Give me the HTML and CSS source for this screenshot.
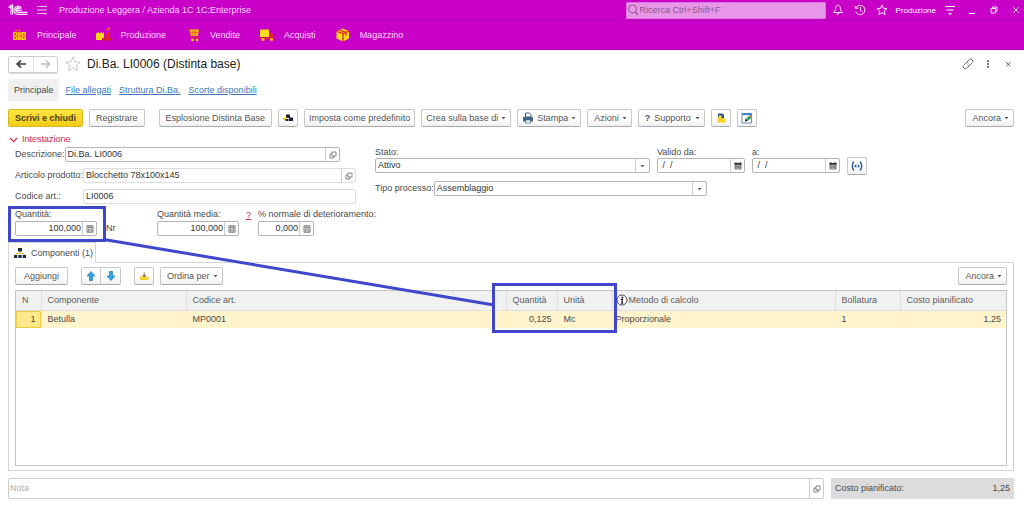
FILE: index.html
```html
<!DOCTYPE html>
<html lang="it">
<head>
<meta charset="utf-8">
<meta name="viewport" content="width=device-width, initial-scale=1">
<title>Di.Ba. LI0006 (Distinta base)</title>
<link rel="stylesheet" href="styles.css">
</head>
<body>
<svg class="sprite" aria-hidden="true">
  <symbol id="open" viewBox="0 0 8 8"><path d="M3 1h4v4H3zM3 3H1v4h4V5" fill="none" stroke="#777" stroke-width=".9"/></symbol>
  <symbol id="calendar" viewBox="0 0 8 8"><path d="M.5 1h7v6.500h-7z" fill="#777"/><path d="M.5 1h7v1.500h-7z" fill="#333"/><path d="M2 0v1.500M6 0v1.500" stroke="#333"/><path d="M1.500 3.500h5M1.500 5h5M1.500 6.500h5" stroke="#ddd" stroke-width=".7" stroke-dasharray="1 .6"/></symbol>
  <symbol id="calc" viewBox="0 0 8 8"><path d="M1 .8h6v6.400H1z" fill="#eee" stroke="#666" stroke-width=".9"/><path d="M2 2.300h4" stroke="#666"/><path d="M2 4.200h4M2 5.800h4" stroke="#666" stroke-dasharray="1 .5"/></symbol>
  <symbol id="caret" viewBox="0 0 5 4"><path d="M.5 1h4L2.500 3.200z" fill="#555"/></symbol>
</svg>

<header class="titlebar">
  <svg class="logo" viewBox="0 0 20 12" aria-label="1C" role="img"><g fill="none" stroke="#fbe6fb" stroke-width="1.200"><path d="M.6 3.500 3 1.500v9M2 4 4.600 1v9.500"/><path d="M13.500 4.500A4 4 0 1 0 10 10.300h9.500M12 5A2.300 2.300 0 1 0 10 8.300h9.500M10.600 5.400a1 1 0 1 0-.4 1h4"/></g></svg>
  <button class="icon-btn" aria-label="Menu"><svg class="i12" viewBox="0 0 12 12"><path d="M1 2.500h10M1 6h10M1 9.500h10" stroke="#f3c4f3"/></svg></button>
  <span class="app-name">Produzione Leggera / Azienda 1C 1C:Enterprise</span>
  <label class="search"><svg class="i12" viewBox="0 0 12 12"><circle cx="5.500" cy="5" r="4" fill="none" stroke="#8e5c8e"/><path d="m8.300 8 2.500 3" stroke="#8e5c8e" stroke-width="1.400"/></svg><input type="search" placeholder="Ricerca Ctrl+Shift+F" aria-label="Ricerca"></label>
  <div class="tools">
    <button class="icon-btn" aria-label="Notifiche"><svg class="i12" viewBox="0 0 12 12"><path d="M1.500 8.500C4 6.500 3.300 5 3.700 3.500 4 2 5 1.500 6 1.500s2 .5 2.300 2c.4 1.500-.3 3 2.200 5zM6 .5v1" fill="none" stroke="#fff" stroke-width=".9"/><path d="M4.500 9.500h3L6 11z" fill="#fff"/></svg></button>
    <button class="icon-btn" aria-label="Cronologia"><svg class="i12" viewBox="0 0 12 12"><path d="M1.800 7.500A4.700 4.700 0 1 0 2 4M1 2l.7 2.500 2.500-.5M6.500 3v3.300l2 1.500" fill="none" stroke="#fff" stroke-width=".9"/></svg></button>
    <button class="icon-btn" aria-label="Preferiti"><svg class="i12" viewBox="0 0 12 12"><path d="m6 1 1.400 3.300 3.600.3-2.700 2.300.8 3.600L6 8.600l-3.100 1.900.8-3.600L1 4.600l3.600-.3z" fill="none" stroke="#fff" stroke-width=".9"/></svg></button>
  </div>
  <span class="user">Produzione</span>
  <div class="tools">
    <button class="icon-btn" aria-label="Opzioni"><svg class="i12" viewBox="0 0 12 12"><path d="M1 2.500h10M2.500 6h7" stroke="#fff"/><path d="M4 9h4L6 11z" fill="#fff"/></svg></button>
    <button class="icon-btn" aria-label="Riduci"><svg class="i12" viewBox="0 0 12 12"><path d="M3 9.500h6" stroke="#fff"/></svg></button>
    <button class="icon-btn" aria-label="Ripristina"><svg class="i12" viewBox="0 0 12 12"><path d="M3 4.500h4.500V9H3zM4.500 4.500V3H9v4.500H7.500" fill="none" stroke="#fff" stroke-width=".9"/></svg></button>
    <button class="icon-btn" aria-label="Chiudi"><svg class="i12" viewBox="0 0 12 12"><path d="m3 3 6 6M9 3 3 9" stroke="#fff" stroke-width=".9"/></svg></button>
  </div>
</header>

<nav class="sections">
  <a href="#"><svg class="i16" viewBox="0 0 16 16"><path d="M1 5h13v8H1z" fill="#ffcf20"/><path d="M4 6.500V3h3.500v3.500" fill="none" stroke="#f05a20" stroke-width="1.200"/><path d="M5.500 5v8M9 5v8M1 9h13" stroke="#f05a20" stroke-width=".9"/><path d="M2.500 7h1.500M11 7h1.500M2.500 11h1.500M11 11h1.500" stroke="#d8202c" stroke-width="1.500"/></svg>Principale</a>
  <a href="#"><svg class="i16" viewBox="0 0 16 16"><path d="M0 6.500 3 5v1.500L6 5v1.500L8 5v8H0z" fill="#ffd91c"/><path d="m9.500 13 1.500-8h2l1 8z" fill="#e8202c"/><path d="M6 11h9.500v2.500H6z" fill="#d8202c"/><path d="M11 3.500c0-2 2-1 3-3" fill="none" stroke="#f07a20" stroke-width="1.500"/></svg>Produzione</a>
  <a href="#"><svg class="i16" viewBox="0 0 16 16"><path d="M2 2.500h2.500l2 8.500h6.500" fill="none" stroke="#e8202c" stroke-width="1.400"/><path d="M4.500 2.500h9.500l-1 6.500H6z" fill="#ffb81c"/><path d="M8 3.500V9M10.500 3.500V9M5.500 5.500h7.500" stroke="#e8502c" stroke-width=".8"/><circle cx="7.500" cy="13" r="1.300" fill="#ffd91c"/><circle cx="12" cy="13" r="1.300" fill="#ffd91c"/></svg>Vendite</a>
  <a href="#"><svg class="i16" viewBox="0 0 16 16"><path d="M1 2.500h9v7.500H1z" fill="#ffd91c"/><path d="M10.500 6h2.500l2 3v3H1v-1.500h9.500z" fill="#e8202c"/><circle cx="4" cy="12.500" r="1.600" fill="#ffb81c"/><circle cx="12.500" cy="12.500" r="1.600" fill="#ffb81c"/></svg>Acquisti</a>
  <a href="#"><svg class="i16" viewBox="0 0 16 16"><path d="m1.500 4.500 6-3 6.500 2.500v7.500l-6 3-6.500-3z" fill="#ffd91c"/><path d="m1.500 4.500 6.500 2v8m0-8 6-2.500M4.500 3l6.500 2.500v3" fill="none" stroke="#e0202c" stroke-width="1.300"/></svg>Magazzino</a>
</nav>

<main class="form">
  <div class="heading">
    <div class="history"><button aria-label="Indietro"><svg class="i12" viewBox="0 0 12 12"><path d="M11 6H3M6 2.500 2.200 6 6 9.500" fill="none" stroke="#444" stroke-width="1.700"/></svg></button><button aria-label="Avanti"><svg class="i12" viewBox="0 0 12 12"><path d="M1 6h8M6 2.500 9.800 6 6 9.500" fill="none" stroke="#bbb" stroke-width="1.300"/></svg></button></div>
    <button class="icon-btn" aria-label="Aggiungi ai preferiti"><svg class="i16" viewBox="0 0 16 16"><path d="m8 .8 1.900 5 5.300.3-4.100 3.300 1.400 5.200L8 11.700l-4.500 2.900 1.400-5.200L.8 6.100l5.300-.3z" fill="none" stroke="#bbb" stroke-width=".8"/></svg></button>
    <h1>Di.Ba. LI0006 (Distinta base)</h1>
    <div class="window-tools">
      <button class="icon-btn" aria-label="Collegamento"><svg class="i12" viewBox="0 0 12 12"><path d="M5 4 7.200 1.800a2 2 0 0 1 3 3L8 7a2 2 0 0 1-2.500 0M7 8l-2.200 2.200a2 2 0 0 1-3-3L4 5a2 2 0 0 1 2.500 0" fill="none" stroke="#777"/></svg></button>
      <button class="icon-btn" aria-label="Altro"><svg class="i12" viewBox="0 0 12 12"><path d="M5 2h2v2H5zM5 5h2v2H5zM5 8h2v2H5z" fill="#777"/></svg></button>
      <button class="icon-btn" aria-label="Chiudi scheda"><svg class="i12" viewBox="0 0 12 12"><path d="m4 4 4.500 4.500M8.500 4 4 8.500" stroke="#666"/></svg></button>
    </div>
  </div>

  <nav class="pages">
    <a class="current" href="#">Principale</a><a href="#">File allegati</a><a href="#">Struttura Di.Ba.</a><a href="#">Scorte disponibili</a>
  </nav>

  <div class="commands">
    <button class="btn primary">Scrivi e chiudi</button>
    <button class="btn">Registrare</button>
    <button class="btn spaced">Esplosione Distinta Base</button>
    <button class="btn square" aria-label="Struttura"><svg class="i12" viewBox="0 0 12 12"><path d="M4 2.500h4v3h3V9H7V6H4z" fill="#14213d"/><path d="M1 5.500h4V8H1z" fill="#f4d01c"/><path d="M3.500 7h3v2h-3z" fill="#14213d"/></svg></button>
    <button class="btn tight">Imposta come predefinito</button>
    <button class="btn menu tight">Crea sulla base di <svg class="caret"><use href="#caret"/></svg></button>
    <button class="btn print"><svg class="i12" viewBox="0 0 12 12"><path d="M3.500 1h4L9 2.500V5H3.500z" fill="#fff" stroke="#456489"/><path d="M1 5h10v4.500H1z" fill="#456489"/><path d="M3.500 8h5v3h-5z" fill="#fff" stroke="#456489" stroke-width=".8"/></svg>Stampa <svg class="caret"><use href="#caret"/></svg></button>
    <button class="btn menu">Azioni <svg class="caret"><use href="#caret"/></svg></button>
    <button class="btn help"><b>?</b>Supporto <svg class="caret"><use href="#caret"/></svg></button>
    <button class="btn square" aria-label="Sicurezza"><svg class="i12" viewBox="0 0 12 12"><path d="M3 1.500h4.500L9 3v3.500H3z" fill="#35527a"/><path d="M2.500 5h4v5.500h-4zM6 6.500h4.500v4H6z" fill="#f9d31c"/><path d="M4 3.500h2.500v2H4z" fill="#f9e370"/></svg></button>
    <button class="btn square" aria-label="Modifica modulo"><svg class="i12" viewBox="0 0 12 12"><path d="M1 1.500h9.500V11H1z" fill="#fff" stroke="#6b8db0"/><path d="M1 1h9.500v2.200H1z" fill="#3f84c5"/><path d="m4 9.500.5-2.500 5-4 2 2-5 4z" fill="#2f9e5a"/><path d="m4 9.500.5-2.500 1.800 2z" fill="#222"/><path d="m9.500 3 2 2-1 1-2-2z" fill="#d98a3a"/></svg></button>
    <button class="btn menu last">Ancora <svg class="caret"><use href="#caret"/></svg></button>
  </div>

  <section class="header-group">
    <h2><svg class="chevron" viewBox="0 0 9 6"><path d="m1 1 3.500 3.700L8 1" fill="none" stroke="#c8284c" stroke-width="1.200"/></svg>Intestazione</h2>
    <div class="columns">
      <div class="left">
        <div class="row desc"><label for="desc">Descrizione:</label><span class="field"><input id="desc" value="Di.Ba. LI0006"><button aria-label="Apri descrizione"><svg class="i8"><use href="#open"/></svg></button></span></div>
        <div class="row"><label class="fixed" for="art">Articolo prodotto:</label><span class="field soft"><input id="art" value="Blocchetto 78x100x145"><button aria-label="Apri articolo"><svg class="i8"><use href="#open"/></svg></button></span></div>
        <div class="row"><label class="fixed" for="cod">Codice art.:</label><span class="field soft"><input id="cod" value="LI0006" readonly></span></div>
      </div>
      <div class="right">
        <div class="state-row">
          <div class="stack grow"><label for="stato">Stato:</label><span class="field"><select id="stato"><option>Attivo</option></select><span class="drop"><svg class="caret"><use href="#caret"/></svg></span></span></div>
          <div class="stack date"><label for="dal">Valido da:</label><span class="field"><input id="dal" value=" /  /"><button aria-label="Calendario da"><svg class="i8"><use href="#calendar"/></svg></button></span></div>
          <div class="stack date"><label for="al">a:</label><span class="field"><input id="al" value=" /  /"><button aria-label="Calendario a"><svg class="i8"><use href="#calendar"/></svg></button></span></div>
          <button class="btn square period" aria-label="Scegli periodo"><svg class="i12" viewBox="0 0 12 12"><path d="M2.800 1.500q-3 4.500 0 9M9.200 1.500q3 4.500 0 9" fill="none" stroke="#345f96" stroke-width="1.500"/><path d="M5.300 4v4L3 6zM6.700 4v4L9 6z" fill="#345f96"/></svg></button>
        </div>
        <div class="row process"><label for="tipo">Tipo processo:</label><span class="field"><select id="tipo"><option>Assemblaggio</option></select><span class="drop"><svg class="caret"><use href="#caret"/></svg></span></span></div>
      </div>
    </div>
    <div class="quantities">
      <div class="stack qty"><label for="q">Quantità:</label><span class="field"><input id="q" class="num" value="100,000"><button aria-label="Calcolatrice quantità"><svg class="i8"><use href="#calc"/></svg></button></span></div>
      <span class="unit">Nr</span>
      <div class="stack qty"><label for="qm">Quantità media:</label><span class="field"><input id="qm" class="num" value="100,000"><button aria-label="Calcolatrice quantità media"><svg class="i8"><use href="#calc"/></svg></button></span></div>
      <a class="hint" href="#">?</a>
      <div class="stack waste"><label for="det">% normale di deterioramento:</label><span class="field"><input id="det" class="num" value="0,000"><button aria-label="Calcolatrice deterioramento"><svg class="i8"><use href="#calc"/></svg></button></span></div>
    </div>
  </section>

  <section class="components">
    <button class="tab"><svg class="i12" viewBox="0 0 12 12"><path d="M6 4v3M2 9V6.500h8V9" fill="none" stroke="#d9b832"/><path d="M4 1h4v3.500H4zM0 8h3.300v3H0zM4.400 8h3.300v3H4.400zM8.700 8H12v3H8.700z" fill="#1c2b4a"/></svg>Componenti (1)</button>
    <div class="panel">
      <div class="commands inner">
        <button class="btn wide">Aggiungi</button>
        <div class="move"><button class="btn square" aria-label="Sposta su"><svg class="i12" viewBox="0 0 12 12"><path d="m6 1.500 4 4.500H7.500v4.500h-3V6H2z" fill="#36a3e8" stroke="#1c77b8" stroke-width=".7"/></svg></button><button class="btn square" aria-label="Sposta giù"><svg class="i12" viewBox="0 0 12 12"><path d="m6 10.500 4-4.500H7.500V1.500h-3V6H2z" fill="#36a3e8" stroke="#1c77b8" stroke-width=".7"/></svg></button></div>
        <button class="btn square" aria-label="Carica"><svg class="i12" viewBox="0 0 12 12"><path d="M2 6.500h8.500V10H2z" fill="#f5cf30"/><path d="M6.200 2.500v4M4.500 5l1.700 2L8 5" fill="none" stroke="#5a5138" stroke-width=".9"/></svg></button>
        <button class="btn menu">Ordina per <svg class="caret"><use href="#caret"/></svg></button>
        <button class="btn menu last">Ancora <svg class="caret"><use href="#caret"/></svg></button>
      </div>
      <div class="grid">
        <table>
          <colgroup><col class="c-n"><col class="c-comp"><col><col class="c-qty"><col class="c-unit"><col class="c-method"><col class="c-stamp"><col class="c-cost"></colgroup>
          <thead><tr><th>N</th><th>Componente</th><th>Codice art.</th><th>Quantità</th><th>Unità</th><th class="method"><span><svg class="i12" viewBox="0 0 12 12"><circle cx="6" cy="6" r="5" fill="#fff" stroke="#333" stroke-width=".9"/><circle cx="6.400" cy="3.500" r="1" fill="#222"/><path d="M4.800 5.300h1.700L5.800 9h1.400" fill="none" stroke="#222" stroke-width="1.300"/></svg>Metodo di calcolo</span></th><th>Bollatura</th><th>Costo pianificato</th></tr></thead>
          <tbody><tr><td class="num active">1</td><td>Betulla</td><td>MP0001</td><td class="num">0,125</td><td>Mc</td><td class="method">Proporzionale</td><td>1</td><td class="num">1,25</td></tr></tbody>
        </table>
      </div>
    </div>
  </section>

  <footer class="bottom">
    <span class="field note"><input placeholder="Nota" aria-label="Nota"><button aria-label="Apri nota"><svg class="i8"><use href="#open"/></svg></button></span>
    <div class="total"><span>Costo pianificato:</span><span>1,25</span></div>
  </footer>
</main>

<svg class="annotation" viewBox="0 0 1024 505" aria-hidden="true"><g fill="none" stroke="#3f48cc" stroke-width="3"><path d="M9.500 207.500h95v33h-95zM493.500 284.500h122v47h-122z"/><path d="M104 239.500 494 305"/></g></svg>
</body>
</html>
```
FILE: styles.css
```css
* { box-sizing: border-box; }
body {
  position: relative;
  display: flex;
  flex-direction: column;
  min-height: 100vh;
  margin: 0;
  background: #fff;
  color: #4a4a4a;
  font: 9px/11px "Liberation Sans", Arial, sans-serif;
}
button, input, select { margin: 0; font: inherit; color: inherit; }
button { display: inline-flex; align-items: center; justify-content: center; white-space: nowrap; }
svg { flex: none; display: block; }
.sprite { position: absolute; width: 0; height: 0; }
.i8 { width: 8px; height: 8px; }
.i12 { width: 12px; height: 12px; }
.i16 { width: 16px; height: 16px; }
.caret { width: 5px; height: 4px; }
.icon-btn { padding: 0; border: 0; background: none; }

.titlebar {
  display: flex;
  align-items: center;
  height: 21px;
  padding: 0 2px 0 8px;
  background: #c800c8;
  border-bottom: 1px solid #b800b8;
  color: #f8d8f8;
}
.logo { width: 20px; height: 12px; margin-right: 8px; }
.app-name { margin: 0 auto 0 11px; }
.search {
  display: flex;
  align-items: center;
  width: 200px;
  height: 17px;
  margin-right: 6px;
  background: #e896e8;
  border: 1px solid #dc78dc;
  border-radius: 1px;
}
.search input { flex: 1; min-width: 0; padding: 0 1px; border: 0; background: none; outline: 0; }
.search input::placeholder { color: #8c5a8c; }
.tools { display: flex; gap: 10px; }
.user { margin: 0 8px; font-size: 8px; color: #fff; }

.sections { display: flex; gap: 19px; height: 29px; padding: 0 12px; background: #c800c8; border-bottom: 1px solid #b000b0; }
.sections a { display: flex; align-items: center; gap: 9px; color: #fbdcfb; text-decoration: none; }

.form { flex: 1; display: flex; flex-direction: column; padding: 5px 10px 6px 8px; }
.heading { display: flex; align-items: center; height: 18px; }
.history { display: flex; margin-right: 7px; border: 1px solid #ccc; border-radius: 2px; box-shadow: 0 1px 0 #ddd; }
.history button { width: 24px; height: 15px; padding: 0; border: 0; background: #fff; }
.history button + button { border-left: 1px solid #ddd; }
h1 { margin: 0 0 0 6px; font-size: 12px; line-height: 16px; font-weight: 400; color: #222; }
.window-tools { display: flex; gap: 8px; margin-left: auto; }

.pages { display: flex; gap: 8px; margin-top: 6px; height: 22px; align-items: center; }
.pages a { color: #3b78c0; }
.pages .current { padding: 6px 5px 5px 6px; margin-right: -1px; background: #f0f0f0; color: #4a4a4a; text-decoration: none; }

.commands { display: flex; gap: 6px; margin-top: 8px; }
.btn {
  height: 18px;
  padding: 0 6px;
  border: 1px solid #c8c8c8;
  border-bottom-color: #aaa;
  border-radius: 2px;
  background: linear-gradient(#fff 50%, #f0f0f0);
  color: #555;
}
.primary { border-color: #d8b820; background: linear-gradient(#ffe640, #f2cc18); font-weight: 700; color: #4a4020; }
.spaced { margin-left: 8px; }
.square { width: 20px; padding: 0; }
.wide { padding: 0 8px; }
.menu { gap: 3px; padding: 0 4px 0 6px; }
.tight { padding: 0 4px; }
.print { gap: 3px; padding: 0 4px; }
.help { gap: 4px; padding: 0 4px 0 6px; }
.last { margin-left: auto; }

h2 { display: flex; align-items: center; gap: 4px; margin: 7px 0 2px 1px; font-size: 9px; line-height: 11px; font-weight: 400; color: #c8284c; }
.chevron { width: 9px; height: 6px; }
.columns { display: grid; grid-template-columns: 341fr 492fr 147fr; gap: 19px; padding-left: 7px; margin-right: -19px; }
.left { display: flex; flex-direction: column; gap: 6px; }
.row { display: flex; align-items: center; }
.desc { margin-right: 16px; }
.fixed { width: 68px; white-space: nowrap; }
.field { display: flex; flex: 1; min-width: 0; height: 15px; border: 1px solid #b4b4b4; border-radius: 2px; background: #fff; }
.field input, .field select { flex: 1; width: 0; min-width: 0; padding: 0 2px; border: 0; outline: 0; background: none; appearance: none; color: #333; }
.field button, .drop { display: flex; align-items: center; justify-content: center; width: 14px; padding: 0; border: 0; border-left: 1px solid #ccc; background: none; }
.field .num { padding-right: 1px; }
.soft { border-color: #ddd; }
.right { display: flex; flex-direction: column; gap: 8px; }
.state-row { display: flex; gap: 7px; align-items: flex-end; }
.stack { display: flex; flex-direction: column; white-space: nowrap; }
.stack .field { flex: none; }
.grow { flex: 1; }
.date { width: 88px; }
.period { margin-bottom: -2px; }
.process { margin-right: 160px; }
.quantities { display: flex; align-items: flex-end; padding-left: 7px; margin-top: 5px; }
.quantities .stack { gap: 1px; }
.qty { width: 82px; }
.unit { width: 51px; margin-left: 9px; padding-bottom: 2px; }
.hint { align-self: flex-start; margin: 1px 7px 0; color: #c8284c; }
.waste .field { width: 56px; }
.num { text-align: right; }

.components { flex: 1; display: flex; flex-direction: column; align-items: stretch; margin-top: 6px; }
.tab { align-self: flex-start; gap: 5px; height: 21px; padding: 0 2px 0 5px; margin-bottom: -1px; z-index: 1; border: 1px solid #d4d4d4; border-bottom: 0; background: #fff; }
.panel { flex: 1; display: flex; flex-direction: column; padding: 4px 6px 4px; border: 1px solid #d4d4d4; }
.inner { gap: 13px; margin-top: 0; }
.inner .menu { margin-left: -7px; }
.inner .last { margin-left: auto; }
.move { display: flex; }
.move .btn:first-child { border-radius: 2px 0 0 2px; }
.move .btn:last-child { border-left: 0; border-radius: 0 2px 2px 0; }
.grid { flex: 1; margin-top: 5px; border: 1px solid #c4c4c4; }
table { width: 100%; table-layout: fixed; border-collapse: collapse; }
th, td { height: 18px; padding: 0 5px 0 6px; border-left: 1px solid #ddd; font-weight: 400; text-align: left; white-space: nowrap; }
th { height: 19px; background: #f1f1f1; color: #5c5c5c; border-bottom: 1px solid #ddd; }
th:first-child, td:first-child { border-left: 0; }
td { background: #fff4cc; border-color: #fdf0bd; }
td.num { text-align: right; }
td.active { background: #ffe78c; box-shadow: inset 0 0 0 1px #f0cc40; }
th.method, td.method { padding-left: 3px; }
.method span { display: flex; align-items: center; gap: 1px; }
.c-n { width: 25px; }
.c-comp { width: 145px; }
.c-qty { width: 51px; }
.c-unit { width: 55px; }
.c-method { width: 223px; }
.c-stamp { width: 65px; }
.c-cost { width: 106px; }

.bottom { display: flex; gap: 7px; margin-top: 7px; }
.note { height: 21px; border-color: #ccc; }
.note input { padding-left: 1px; }
.note input::placeholder { color: #b0b0b0; }
.total { display: flex; align-items: center; justify-content: space-between; width: 183px; padding: 0 4px; background: #dcdcdc; }

.annotation { position: absolute; left: 0; top: 0; width: 1024px; height: 505px; z-index: 2; pointer-events: none; }
```
